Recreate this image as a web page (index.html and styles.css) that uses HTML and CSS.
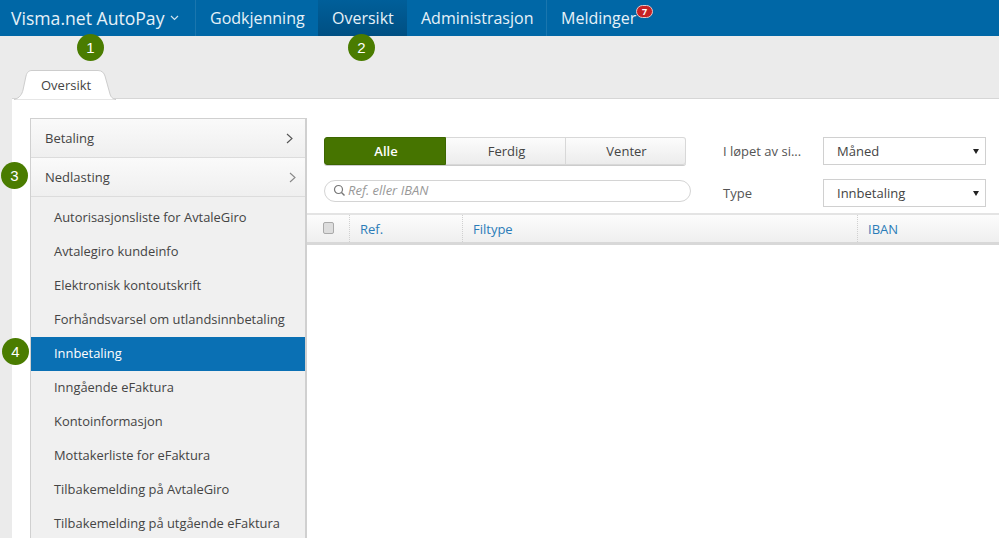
FILE: index.html
```html
<!DOCTYPE html>
<html lang="en">
<head>
    <meta charset="UTF-8">
    <meta name="viewport" content="width=device-width, initial-scale=1.0">
    <title>Visma.net AutoPay</title>
    <link rel="stylesheet" href="styles.css">
</head>
<body>
    <nav class="topbar">
        <a class="nav-item brand">Visma.net AutoPay
            <svg class="caret" width="9" height="6" viewBox="0 0 9 6"><path d="M1 1l3.500 3.500L8 1" fill="none" stroke="#cfe3f0" stroke-width="1.200"/></svg>
            <span class="step step-1">1</span>
        </a>
        <a class="nav-item item-godkjenning">Godkjenning</a>
        <a class="nav-item item-oversikt active">Oversikt<span class="step step-2">2</span></a>
        <a class="nav-item item-admin">Administrasjon</a>
        <a class="nav-item item-meldinger">Meldinger<span class="badge">7</span></a>
    </nav>

    <div class="tabs">
        <div class="tab">
            <svg class="tab-shape" width="102" height="30" viewBox="0 0 102 30"><path d="M0 29.500C6 28 8 24 9 20L12 6C13 2 15 .5 18 .5H84C88 .5 90 3 91 6L96 24C97 27 98 28.500 102 29.500V30H0Z" fill="#fff" stroke="#cdcdcd"/></svg>
            <span class="tab-label">Oversikt</span>
        </div>
    </div>

    <div class="panel">
        <aside class="sidebar">
            <div class="group">Betaling
                <svg class="chevron" width="7" height="11" viewBox="0 0 7 11"><path d="M1 1l5 4.500-5 4.500" fill="none" stroke="#555" stroke-width="1.100"/></svg>
            </div>
            <div class="group">Nedlasting
                <svg class="chevron chevron-open" width="7" height="11" viewBox="0 0 7 11"><path d="M1 1l5 4.500-5 4.500" fill="none" stroke="#888" stroke-width="1.100"/></svg>
                <span class="step step-3">3</span>
            </div>
            <ul class="sublist">
                <li>Autorisasjonsliste for AvtaleGiro</li>
                <li>Avtalegiro kundeinfo</li>
                <li>Elektronisk kontoutskrift</li>
                <li>Forhåndsvarsel om utlandsinnbetaling</li>
                <li class="selected">Innbetaling<span class="step step-4">4</span></li>
                <li>Inngående eFaktura</li>
                <li>Kontoinformasjon</li>
                <li>Mottakerliste for eFaktura</li>
                <li>Tilbakemelding på AvtaleGiro</li>
                <li>Tilbakemelding på utgående eFaktura</li>
            </ul>
        </aside>

        <main class="content">
            <div class="filters">
                <div class="filters-left">
                    <div class="btn-group">
                        <button class="btn btn-on">Alle</button>
                        <button class="btn">Ferdig</button>
                        <button class="btn">Venter</button>
                    </div>
                    <div class="search">
                        <svg width="13" height="13" viewBox="0 0 13 13"><circle cx="5.500" cy="5.500" r="4" fill="none" stroke="#777" stroke-width="1.200"/><path d="M8.500 8.500l3 3" stroke="#777" stroke-width="1.400"/></svg>
                        <span>Ref. eller IBAN</span>
                    </div>
                </div>
                <div class="filters-right">
                    <label class="filter-label">I løpet av si...</label>
                    <div class="select">Måned<i class="select-arrow"></i></div>
                    <label class="filter-label">Type</label>
                    <div class="select">Innbetaling<i class="select-arrow"></i></div>
                </div>
            </div>
            <div class="table-head">
                <div class="col col-check"><span class="checkbox"></span></div>
                <div class="col col-ref">Ref.</div>
                <div class="col col-type">Filtype</div>
                <div class="col col-iban">IBAN</div>
            </div>
        </main>
    </div>
</body>
</html>
```

FILE: styles.css
```css
html, body {
    height: 100%;
}
body {
    margin: 0;
    font-family: "Open Sans", sans-serif;
    font-size: 13px;
    color: #444;
    background-color: #ebebeb;
    overflow: hidden;
}
.topbar {
    display: flex;
    height: 36px;
    background-color: #0067a6;
}
.nav-item {
    position: relative;
    display: flex;
    align-items: center;
    box-sizing: border-box;
    height: 36px;
    padding-left: 14px;
    font-size: 16px;
    color: #e6f1f8;
    border-right: 1px solid #1a76ae;
}
.brand {
    width: 196px;
    padding-left: 11px;
    font-size: 17.600px;
}
.caret {
    margin-left: 6px;
}
.item-godkjenning {
    width: 122px;
    border-right: none;
}
.item-oversikt {
    width: 89px;
    border-right: none;
}
.active {
    background: linear-gradient(#005f9a, #004f82);
}
.item-admin {
    width: 140px;
}
.item-meldinger {
    border-right: none;
}
.badge {
    position: absolute;
    left: 89px;
    top: 5px;
    width: 15px;
    height: 11px;
    border: 1px solid #e4c9c9;
    border-radius: 7px;
    background-color: #c62326;
    color: #fff;
    font-size: 9px;
    font-weight: 700;
    line-height: 11px;
    text-align: center;
}
.step {
    position: absolute;
    width: 27px;
    height: 27px;
    border-radius: 50%;
    background-color: #4a7c00;
    color: #fff;
    font-family: "Liberation Sans", sans-serif;
    font-size: 15px;
    font-weight: 400;
    line-height: 27px;
    text-align: center;
}
.step-1 {
    left: 77px;
    top: 34px;
}
.step-2 {
    left: 30px;
    top: 34px;
}
.step-3 {
    left: -30px;
    top: 4px;
}
.step-4 {
    left: -29px;
    top: 1px;
}
.tabs {
    height: 62px;
    padding-left: 14px;
    box-sizing: border-box;
    padding-top: 34px;
}
.tab {
    position: relative;
    width: 102px;
    height: 30px;
    z-index: 1;
}
.tab-shape {
    position: absolute;
    left: 0;
    top: 0;
}
.tab-label {
    position: relative;
    display: block;
    padding-left: 27px;
    font-size: 13px;
    line-height: 31px;
    color: #444;
}
.panel {
    display: flex;
    box-sizing: border-box;
    height: 440px;
    margin-left: 12px;
    padding: 19px 0 0 18px;
    background-color: #fff;
    border-top: 1px solid #d6d6d6;
}
.sidebar {
    position: relative;
    box-sizing: border-box;
    flex: 0 0 277px;
    background-color: #f0f0f0;
    border: 1px solid #d0d0d0;
    border-right-width: 2px;
    border-bottom: none;
}
.group {
    position: relative;
    display: flex;
    align-items: center;
    justify-content: space-between;
    box-sizing: border-box;
    height: 39px;
    padding: 0 12px 0 14px;
    font-size: 13px;
    background: linear-gradient(#fafafa, #efefef);
    border-bottom: 1px solid #dcdcdc;
}
.chevron-open {
    margin-right: -3px;
}
.sublist {
    margin: 0;
    padding: 4px 0 0;
    list-style: none;
}
.sublist li {
    position: relative;
    height: 34px;
    padding-left: 23px;
    font-size: 12.900px;
    line-height: 33px;
    color: #444;
    white-space: nowrap;
}
.sublist .selected {
    background-color: #0a70b4;
    color: #fff;
}
.content {
    flex: 1;
    min-width: 0;
}
.filters {
    display: flex;
    box-sizing: border-box;
    height: 95px;
    padding: 19px 13px 0 17px;
    gap: 32px;
}
.filters-left {
    width: 367px;
}
.btn-group {
    display: flex;
    width: 362px;
    height: 28px;
    box-shadow: 0 1px 0 #ccc;
    border-radius: 3px;
}
.btn {
    flex: 0 0 120px;
    padding: 0 0 1px 2px;
    font-family: inherit;
    font-size: 13px;
    color: #444;
    background: linear-gradient(#fcfcfc, #ececec);
    border: 1px solid #d8d8d8;
    border-left: none;
}
.btn:last-child {
    border-radius: 0 3px 3px 0;
}
.btn-on {
    flex-basis: 122px;
    color: #fff;
    font-weight: 600;
    background: #467400;
    border: 1px solid #3c6600;
    border-radius: 3px 0 0 3px;
}
.search {
    display: flex;
    align-items: center;
    gap: 2px;
    box-sizing: border-box;
    height: 22px;
    margin-top: 15px;
    padding: 0 0 2px 8px;
    border: 1px solid #d4d4d4;
    border-radius: 11px;
    font-size: 13px;
    font-style: italic;
    color: #999;
}
.filters-right {
    flex: 1;
    display: grid;
    grid-template-columns: 100px 1fr;
    grid-auto-rows: 28px;
    row-gap: 14px;
    align-items: center;
}
.filter-label {
    font-size: 13px;
    color: #555;
}
.select {
    position: relative;
    box-sizing: border-box;
    height: 28px;
    padding-left: 13px;
    line-height: 27px;
    font-size: 13px;
    color: #444;
    border: 1px solid #d0d0d0;
}
.select-arrow {
    position: absolute;
    right: 6px;
    top: 11px;
    border-top: 5px solid #222;
    border-left: 3px solid transparent;
    border-right: 3px solid transparent;
}
.table-head {
    display: flex;
    box-sizing: border-box;
    height: 32px;
    background: linear-gradient(#fcfcfc, #efefef);
    border-top: 2px solid #e4e4e4;
    border-bottom: 3px solid #d8d8d8;
    font-size: 13px;
    line-height: 29px;
    color: #2b7cb8;
}
.col {
    box-sizing: border-box;
    padding-left: 10px;
    border-left: 1px dotted #d0d0d0;
}
.col-check {
    flex: 0 0 42px;
    padding-left: 16px;
    border-left: none;
}
.checkbox {
    display: block;
    box-sizing: border-box;
    width: 11px;
    height: 12px;
    margin-top: 7px;
    background-color: #ddd;
    border: 1px solid #aaa;
    border-radius: 2px;
}
.col-ref {
    flex: 0 0 113px;
}
.col-type {
    flex: 0 0 395px;
}
.col-iban {
    flex: 1;
}
```
